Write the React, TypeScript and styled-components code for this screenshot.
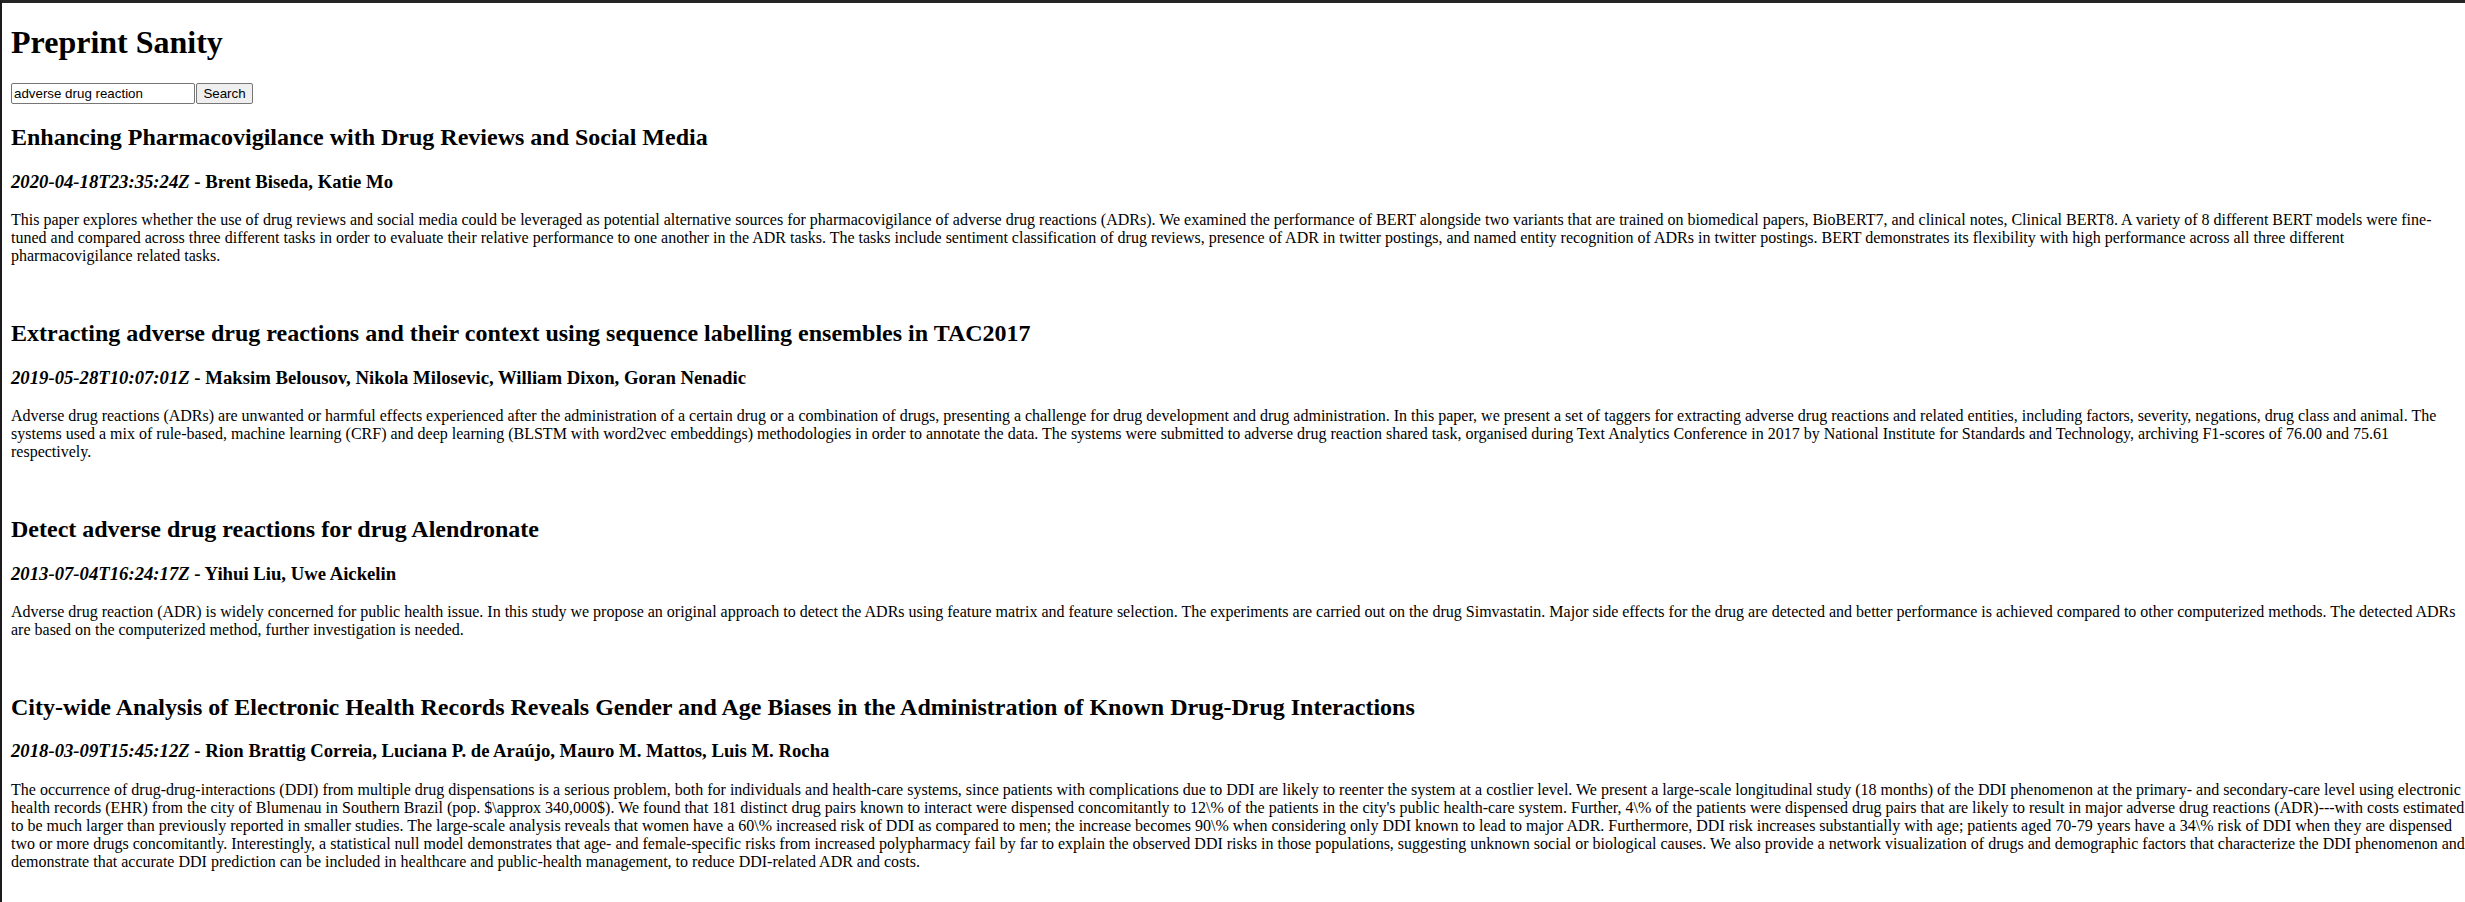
import React from "react";
import styled, { createGlobalStyle } from "styled-components";

const GlobalStyle = createGlobalStyle`
  html, body {
    margin: 0;
    padding: 0;
    background: #ffffff;
    overflow: hidden;
  }
  body {
    font-family: "Liberation Serif", "Times New Roman", serif;
    color: #000000;
  }
`;

const Window = styled.div`
  box-sizing: border-box;
  min-height: 100vh;
  border-top: 3px solid #252525;
  border-left: 2px solid #1d1a1d;
  padding: 0 0 8px 9px;
  display: flow-root;
`;

const Title = styled.h1`
  font-size: 32px;
  font-weight: bold;
  margin: 21.44px 0;
`;

const SearchForm = styled.form`
  display: flex;
  align-items: stretch;
  margin: 0;
`;

const SearchInput = styled.input`
  box-sizing: border-box;
  width: 184px;
  height: 21px;
  margin: 0;
  padding: 1px 2px;
  border: 1px solid #767676;
  border-radius: 2px;
  font-family: "Liberation Sans", Arial, sans-serif;
  font-size: 13.333px;
  color: #000;
  background: #fff;
  outline: none;
`;

const SearchButton = styled.button`
  box-sizing: border-box;
  width: 57px;
  height: 21px;
  margin: 0 0 0 1px;
  padding: 1px 6px;
  border: 1px solid #767676;
  border-radius: 2px;
  background: #efefef;
  font-family: "Liberation Sans", Arial, sans-serif;
  font-size: 13.333px;
  color: #000;
`;

const Article = styled.section`
  padding-bottom: 18.4px;
`;

const PaperTitle = styled.h2`
  font-size: 24px;
  font-weight: bold;
  margin: 19.92px 0;
`;

const Meta = styled.h3`
  font-size: 18.72px;
  font-weight: bold;
  margin: 18.72px 0;
`;

const Abstract = styled.p`
  font-size: 16px;
  margin: 16px 0;
`;

type Paper = {
  title: string;
  date: string;
  authors: string;
  abstract: string;
};

const papers: Paper[] = [
  {
    title: "Enhancing Pharmacovigilance with Drug Reviews and Social Media",
    date: "2020-04-18T23:35:24Z",
    authors: "Brent Biseda, Katie Mo",
    abstract:
      "This paper explores whether the use of drug reviews and social media could be leveraged as potential alternative sources for pharmacovigilance of adverse drug reactions (ADRs). We examined the performance of BERT alongside two variants that are trained on biomedical papers, BioBERT7, and clinical notes, Clinical BERT8. A variety of 8 different BERT models were fine-tuned and compared across three different tasks in order to evaluate their relative performance to one another in the ADR tasks. The tasks include sentiment classification of drug reviews, presence of ADR in twitter postings, and named entity recognition of ADRs in twitter postings. BERT demonstrates its flexibility with high performance across all three different pharmacovigilance related tasks.",
  },
  {
    title:
      "Extracting adverse drug reactions and their context using sequence labelling ensembles in TAC2017",
    date: "2019-05-28T10:07:01Z",
    authors: "Maksim Belousov, Nikola Milosevic, William Dixon, Goran Nenadic",
    abstract:
      "Adverse drug reactions (ADRs) are unwanted or harmful effects experienced after the administration of a certain drug or a combination of drugs, presenting a challenge for drug development and drug administration. In this paper, we present a set of taggers for extracting adverse drug reactions and related entities, including factors, severity, negations, drug class and animal. The systems used a mix of rule-based, machine learning (CRF) and deep learning (BLSTM with word2vec embeddings) methodologies in order to annotate the data. The systems were submitted to adverse drug reaction shared task, organised during Text Analytics Conference in 2017 by National Institute for Standards and Technology, archiving F1-scores of 76.00 and 75.61 respectively.",
  },
  {
    title: "Detect adverse drug reactions for drug Alendronate",
    date: "2013-07-04T16:24:17Z",
    authors: "Yihui Liu, Uwe Aickelin",
    abstract:
      "Adverse drug reaction (ADR) is widely concerned for public health issue. In this study we propose an original approach to detect the ADRs using feature matrix and feature selection. The experiments are carried out on the drug Simvastatin. Major side effects for the drug are detected and better performance is achieved compared to other computerized methods. The detected ADRs are based on the computerized method, further investigation is needed.",
  },
  {
    title:
      "City-wide Analysis of Electronic Health Records Reveals Gender and Age Biases in the Administration of Known Drug-Drug Interactions",
    date: "2018-03-09T15:45:12Z",
    authors: "Rion Brattig Correia, Luciana P. de Araújo, Mauro M. Mattos, Luis M. Rocha",
    abstract:
      "The occurrence of drug-drug-interactions (DDI) from multiple drug dispensations is a serious problem, both for individuals and health-care systems, since patients with complications due to DDI are likely to reenter the system at a costlier level. We present a large-scale longitudinal study (18 months) of the DDI phenomenon at the primary- and secondary-care level using electronic health records (EHR) from the city of Blumenau in Southern Brazil (pop. $\\approx 340,000$). We found that 181 distinct drug pairs known to interact were dispensed concomitantly to 12\\% of the patients in the city's public health-care system. Further, 4\\% of the patients were dispensed drug pairs that are likely to result in major adverse drug reactions (ADR)---with costs estimated to be much larger than previously reported in smaller studies. The large-scale analysis reveals that women have a 60\\% increased risk of DDI as compared to men; the increase becomes 90\\% when considering only DDI known to lead to major ADR. Furthermore, DDI risk increases substantially with age; patients aged 70-79 years have a 34\\% risk of DDI when they are dispensed two or more drugs concomitantly. Interestingly, a statistical null model demonstrates that age- and female-specific risks from increased polypharmacy fail by far to explain the observed DDI risks in those populations, suggesting unknown social or biological causes. We also provide a network visualization of drugs and demographic factors that characterize the DDI phenomenon and demonstrate that accurate DDI prediction can be included in healthcare and public-health management, to reduce DDI-related ADR and costs.",
  },
];

export default function App() {
  return (
    <>
      <GlobalStyle />
      <Window>
        <Title>Preprint Sanity</Title>
        <SearchForm onSubmit={(e) => e.preventDefault()}>
          <SearchInput type="text" defaultValue="adverse drug reaction" />
          <SearchButton type="submit">Search</SearchButton>
        </SearchForm>
        {papers.map((p) => (
          <Article key={p.title}>
            <PaperTitle>{p.title}</PaperTitle>
            <Meta>
              <em>{p.date}</em> - {p.authors}
            </Meta>
            <Abstract>{p.abstract}</Abstract>
          </Article>
        ))}
      </Window>
    </>
  );
}
